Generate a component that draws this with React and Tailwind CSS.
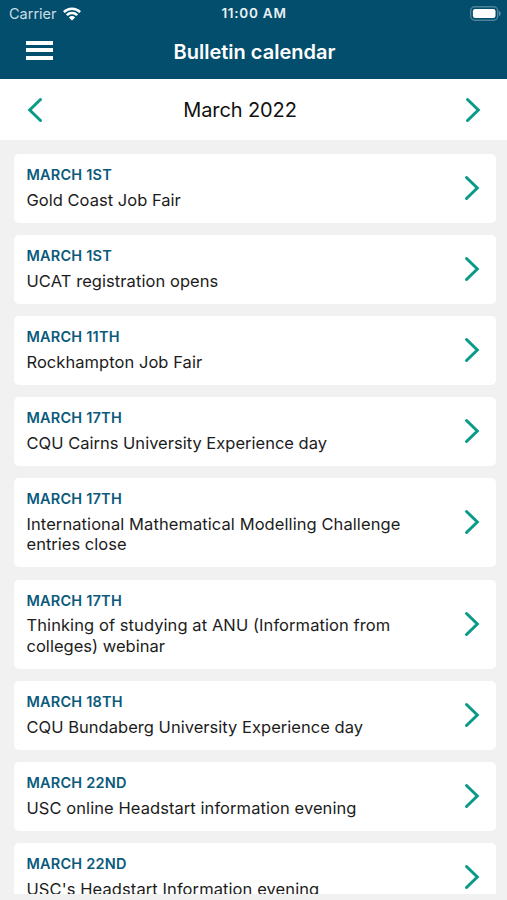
const events = [
  { date: 'March 1st', lines: [{ text: 'Gold Coast Job Fair', tracking: 'tracking-[0.02px]' }] },
  { date: 'March 1st', lines: [{ text: 'UCAT registration opens', tracking: 'tracking-[0.07px]' }] },
  { date: 'March 11th', lines: [{ text: 'Rockhampton Job Fair', tracking: 'tracking-[0.05px]' }] },
  { date: 'March 17th', lines: [{ text: 'CQU Cairns University Experience day', tracking: 'tracking-[0.01px]' }] },
  {
    date: 'March 17th',
    lines: [
      { text: 'International Mathematical Modelling Challenge', tracking: 'tracking-[0.08px]' },
      { text: 'entries close', tracking: 'tracking-[0.02px]' },
    ],
  },
  {
    date: 'March 17th',
    lines: [
      { text: 'Thinking of studying at ANU (Information from', tracking: 'tracking-[0.08px]' },
      { text: 'colleges) webinar', tracking: 'tracking-[0.02px]' },
    ],
  },
  { date: 'March 18th', lines: [{ text: 'CQU Bundaberg University Experience day', tracking: 'tracking-[0.03px]' }] },
  { date: 'March 22nd', lines: [{ text: 'USC online Headstart information evening', tracking: 'tracking-[0.07px]' }] },
  { date: 'March 22nd', lines: [{ text: "USC's Headstart Information evening", tracking: 'tracking-[0.09px]' }] },
];

function Chevron({ left = false }) {
  return (
    <svg width="16" height="26" viewBox="0 0 16 26" fill="none" className={left ? 'shrink-0 -scale-x-100' : 'shrink-0'}>
      <path d="M2.5 2.5 13.3 13 2.5 23.5" stroke="#0a9a88" strokeWidth="3" strokeLinecap="round" />
    </svg>
  );
}

function StatusBar() {
  return (
    <div className="grid h-[27px] grid-cols-3 items-center pr-[6px] pl-[9px] leading-[27px]">
      <div className="flex items-center gap-[6px] text-[#c9dde6]">
        <span className="text-[14.5px]">Carrier</span>
        <svg width="18" height="14" viewBox="0 0 18 14" fill="none" stroke="#fff" strokeWidth="2.5">
          <path d="M.9 5.2a11.5 11.5 0 0 1 16.2 0M3.8 8.2a7.4 7.4 0 0 1 10.4 0" />
          <path d="M9 13.5 5.9 10.4a4.4 4.4 0 0 1 6.2 0z" fill="#fff" stroke="none" />
        </svg>
      </div>
      <div className="-translate-x-[1px] text-center text-[13.5px] font-semibold tracking-[0.75px] whitespace-nowrap text-[#e8f1f4]">11:00 AM</div>
      <svg className="justify-self-end" width="31" height="15" viewBox="0 0 31 15">
        <rect x=".7" y=".7" width="27" height="13.6" rx="4" fill="none" stroke="#4d8299" strokeWidth="1.4" />
        <rect x="2.9" y="2.9" width="22.6" height="9.2" rx="2.3" fill="#fff" />
        <path d="M29 5c2.2.8 2.2 4.2 0 5z" fill="#6796aa" />
      </svg>
    </div>
  );
}

export default function App() {
  return (
    <div className="flex h-[900px] w-[507px] flex-col overflow-hidden bg-[#f1f1f1] font-[Inter,sans-serif] text-[#1c1c1c]">
      <header className="h-[79px] shrink-0 bg-[#034e6c] text-white">
        <StatusBar />
        <div className="grid h-[52px] grid-cols-[1fr_auto_1fr] items-center pl-[26px]">
          <div className="flex w-[27px] -translate-y-[3px] flex-col gap-[3.5px]">
            <i className="h-[4px] bg-white" />
            <i className="h-[4px] bg-white" />
            <i className="h-[4px] bg-white" />
          </div>
          <h1 className="-translate-x-[12px] -translate-y-[1px] text-[20px] font-semibold">Bulletin calendar</h1>
        </div>
      </header>
      <div className="flex h-[61px] shrink-0 items-center justify-between bg-white pr-[26px] pl-[27px]">
        <Chevron left />
        <h2 className="-translate-x-[14px] text-[20px] tracking-[-0.1px] text-[#111]">March 2022</h2>
        <Chevron />
      </div>
      <main className="flex h-[754px] shrink-0 flex-col gap-[12.5px] overflow-hidden pt-[14px] pr-[11px] pl-[14px]">
        {events.map(({ date, lines }, i) => (
          <article key={i} className="flex shrink-0 items-center justify-between rounded-[5px] bg-white pt-[11px] pr-[16px] pb-[12px] pl-[12.5px]">
            <div>
              <div className="h-[20px] text-[14.5px] leading-[20px] font-semibold tracking-[0.2px] text-[#0b5a7c] uppercase">{date}</div>
              <div className="mt-[4.5px] mb-[0.5px] text-[16.5px] leading-[20.5px] whitespace-nowrap">
                {lines.map(({ text, tracking }) => (
                  <div key={text} className={tracking}>{text}</div>
                ))}
              </div>
            </div>
            <Chevron />
          </article>
        ))}
      </main>
    </div>
  );
}
